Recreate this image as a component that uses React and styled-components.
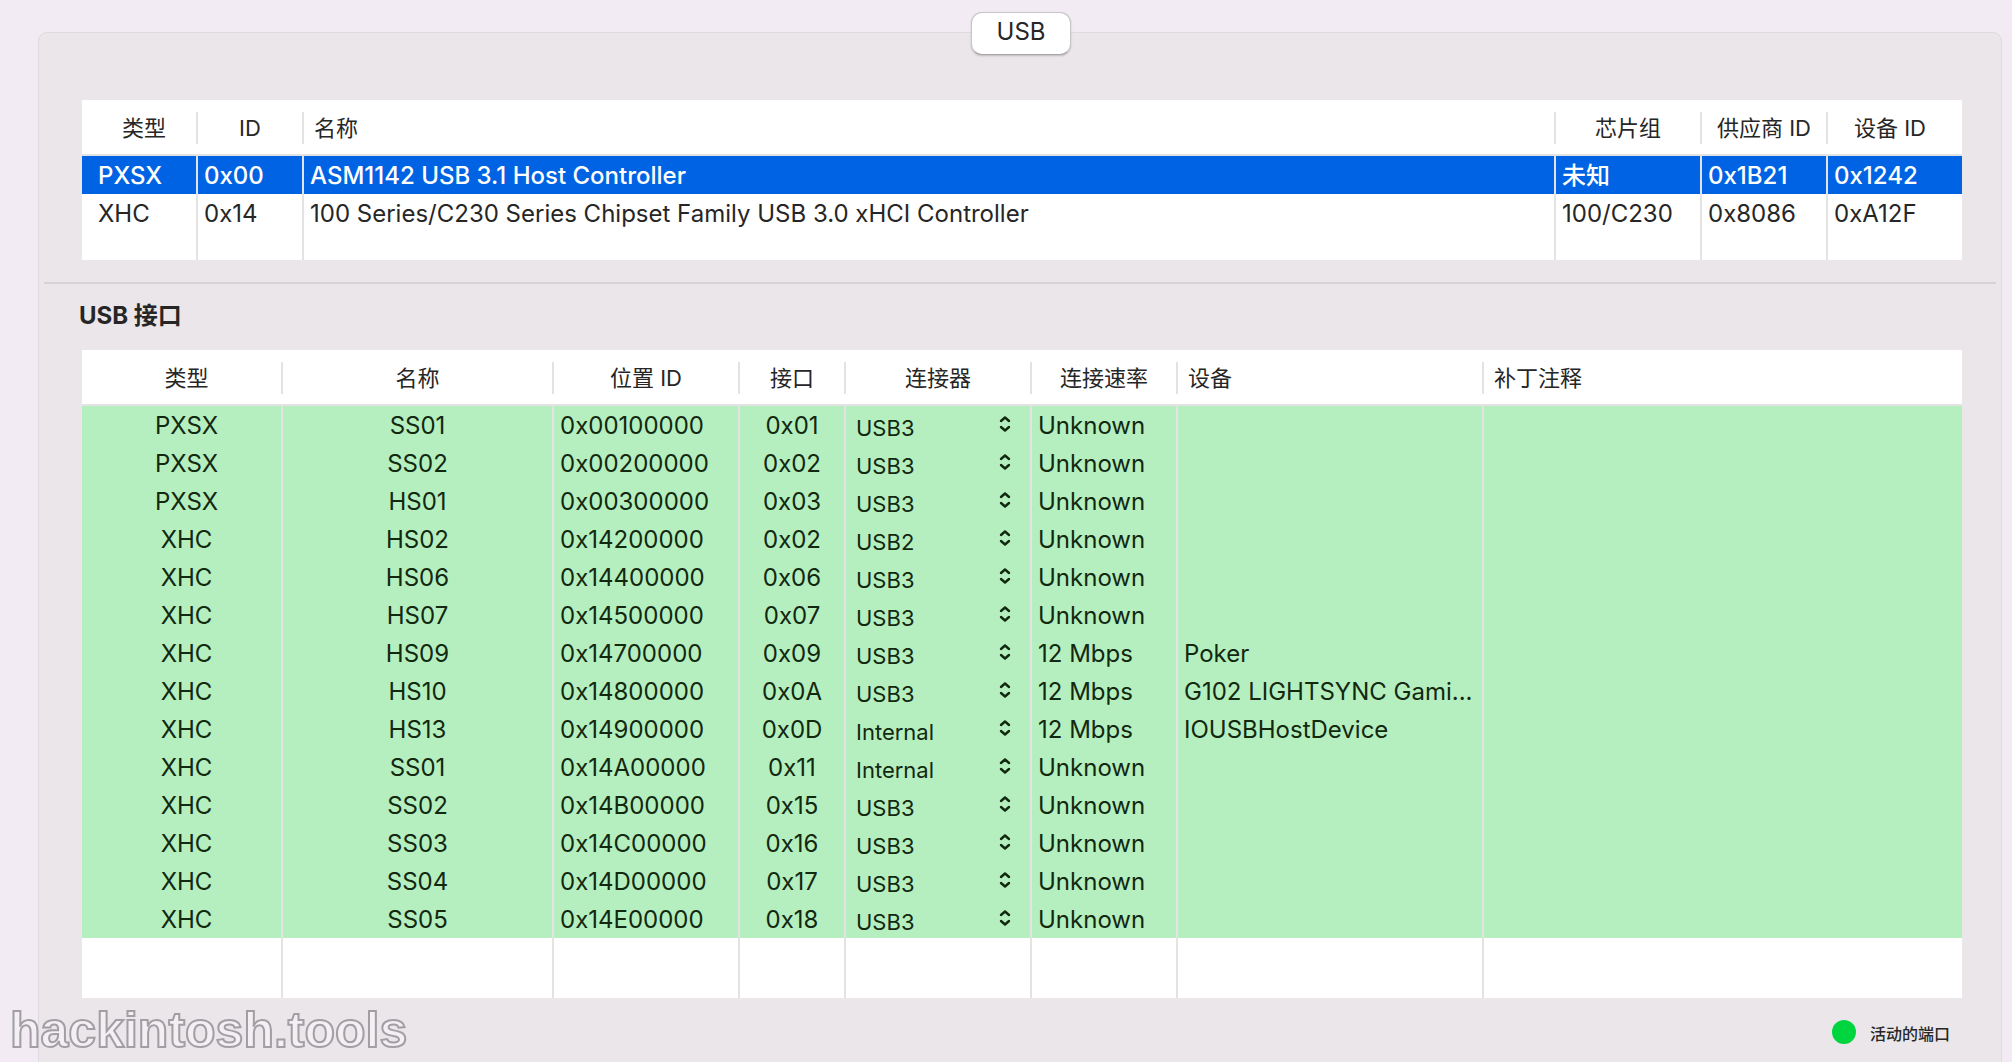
import React, { useState } from "react";
import styled, { createGlobalStyle } from "styled-components";

const GlobalStyle = createGlobalStyle`
  *, *::before, *::after { box-sizing: border-box; }
  body {
    margin: 0;
    background: #f2ebf3;
    color: #262626;
    font-family: Inter, "Noto Sans CJK SC", sans-serif;
    overflow: hidden;
  }
`;

const Page = styled.main`
  position: relative;
  min-height: 100vh;
  padding: 12px 10px 0 38px;
  display: flex;
  flex-direction: column;
`;

const Tabs = styled.nav`
  display: flex;
  justify-content: center;
  position: relative;
  z-index: 1;
  padding-left: 2px;
  margin-bottom: -23px;
`;

const Tab = styled.button`
  width: 100px;
  height: 43px;
  padding: 0 0 3px;
  border: 1px solid #c9c5ca;
  border-bottom-color: #aaa7ab;
  border-radius: 11px;
  background: #fff;
  box-shadow: 0 1px 2px rgba(0, 0, 0, 0.2);
  color: #262626;
  font: 400 24px/36px Inter, sans-serif;
`;

const Panel = styled.section`
  flex: 1;
  min-height: 1040px;
  padding: 67px 5px 0;
  border: 1px solid #dfdadf;
  border-radius: 9px 9px 0 0;
  background: #eae6e9;
`;

const Section = styled.div`
  padding: 0 34px 0 38px;
`;

const Divider = styled.hr`
  height: 2px;
  margin: 22px 0 0;
  border: 0;
  background: #d6d2d6;
`;

const Title = styled.h2`
  margin: 0 0 0 -3px;
  padding: 14px 0 16px;
  font-size: 24px;
  line-height: 36px;
  font-weight: 700;
`;

const Table = styled.table`
  width: 100%;
  border-collapse: separate;
  border-spacing: 0;
  table-layout: fixed;
  background: #fff;
`;

const Col = styled.col`
  width: ${(p) => (p.$width ? `${p.$width}px` : "auto")};
`;

const HeadCell = styled.th`
  height: 56px;
  padding: 2px 12px 0 10px;
  border-bottom: 2px solid #e3e3e3;
  background: linear-gradient(#e3e3e3, #e3e3e3) right 12px / 2px 32px no-repeat;
  font-size: 22px;
  line-height: 32px;
  font-weight: 400;
  text-align: ${(p) => p.$align || "left"};
  white-space: nowrap;
  &:first-child { padding-left: 20px; }
  &:last-child {
    padding-right: 20px;
    background: none;
  }
`;

const Row = styled.tr`
  background: ${(p) => (p.$selected ? "#0063e3" : p.$active ? "#b5efc0" : "#fff")};
  color: ${(p) => (p.$selected ? "#fff" : p.$active ? "#12280f" : "#262626")};
  font-weight: ${(p) => (p.$selected ? 500 : 400)};
`;

const Cell = styled.td`
  height: ${(p) => p.$height || 38}px;
  padding: 2px 6px 0 ${(p) => p.$indent || 6}px;
  border-right: 2px solid #e3e3e3;
  font-size: 24px;
  line-height: 36px;
  text-align: ${(p) => p.$align || "left"};
  white-space: nowrap;
  overflow: hidden;
  text-overflow: ellipsis;
  &:last-child { border-right: 0; }
`;

const Picker = styled.label`
  display: flex;
  align-items: center;
  height: 36px;
  padding-right: 13px;
`;

const Select = styled.select`
  flex: 1;
  min-width: 0;
  height: 36px;
  padding: 4px 0 0 4px;
  border: 0;
  background: none;
  appearance: none;
  color: inherit;
  font: 400 22px/32px Inter, sans-serif;
`;

const Arrows = styled.svg`
  width: 12px;
  height: 20px;
  margin-bottom: 4px;
  fill: none;
  stroke: currentColor;
  stroke-width: 2.4;
  stroke-linecap: round;
  stroke-linejoin: round;
`;

const Legend = styled.footer`
  display: flex;
  justify-content: flex-end;
  align-items: center;
  gap: 14px;
  padding: 20px 12px 0 0;
  font-size: 16px;
  line-height: 28px;
  font-weight: 500;
`;

const LegendText = styled.span`
  height: 28px;
  padding-top: 2px;
`;

const Dot = styled.i`
  width: 24px;
  height: 24px;
  border-radius: 50%;
  background: #00d53f;
`;

const Watermark = styled.div`
  position: absolute;
  left: 10px;
  top: 1001px;
  font: 700 50px/58px "Liberation Sans", Arial, sans-serif;
  color: #f3f0f4;
  -webkit-text-stroke: 2px #a29ea4;
`;

const controllerColumns = [
  { label: "类型", width: 116, align: "center", indent: 16 },
  { label: "ID", width: 106, align: "center" },
  { label: "名称" },
  { label: "芯片组", width: 146, align: "center" },
  { label: "供应商 ID", width: 126, align: "center" },
  { label: "设备 ID", width: 134, align: "center" },
];

const controllers = [
  ["PXSX", "0x00", "ASM1142 USB 3.1 Host Controller", "未知", "0x1B21", "0x1242"],
  ["XHC", "0x14", "100 Series/C230 Series Chipset Family USB 3.0 xHCI Controller", "100/C230", "0x8086", "0xA12F"],
];

const portColumns = [
  { label: "类型", width: 201, align: "center", cell: "center", indent: 16 },
  { label: "名称", width: 271, align: "center", cell: "center" },
  { label: "位置 ID", width: 186, align: "center" },
  { label: "接口", width: 106, align: "center", cell: "center" },
  { label: "连接器", width: 186, align: "center" },
  { label: "连接速率", width: 146, align: "center" },
  { label: "设备", width: 306 },
  { label: "补丁注释" },
];

const ports = [
  ["PXSX", "SS01", "0x00100000", "0x01", "USB3", "Unknown", "", ""],
  ["PXSX", "SS02", "0x00200000", "0x02", "USB3", "Unknown", "", ""],
  ["PXSX", "HS01", "0x00300000", "0x03", "USB3", "Unknown", "", ""],
  ["XHC", "HS02", "0x14200000", "0x02", "USB2", "Unknown", "", ""],
  ["XHC", "HS06", "0x14400000", "0x06", "USB3", "Unknown", "", ""],
  ["XHC", "HS07", "0x14500000", "0x07", "USB3", "Unknown", "", ""],
  ["XHC", "HS09", "0x14700000", "0x09", "USB3", "12 Mbps", "Poker", ""],
  ["XHC", "HS10", "0x14800000", "0x0A", "USB3", "12 Mbps", "G102 LIGHTSYNC Gami...", ""],
  ["XHC", "HS13", "0x14900000", "0x0D", "Internal", "12 Mbps", "IOUSBHostDevice", ""],
  ["XHC", "SS01", "0x14A00000", "0x11", "Internal", "Unknown", "", ""],
  ["XHC", "SS02", "0x14B00000", "0x15", "USB3", "Unknown", "", ""],
  ["XHC", "SS03", "0x14C00000", "0x16", "USB3", "Unknown", "", ""],
  ["XHC", "SS04", "0x14D00000", "0x17", "USB3", "Unknown", "", ""],
  ["XHC", "SS05", "0x14E00000", "0x18", "USB3", "Unknown", "", ""],
];

function ConnectorPicker({ initial, port }) {
  const [value, setValue] = useState(initial);
  return (
    <Picker>
      <Select aria-label={port} value={value} onChange={(e) => setValue(e.target.value)}>
        <option>USB2</option>
        <option>USB3</option>
        <option>Internal</option>
      </Select>
      <Arrows viewBox="0 0 12 20" aria-hidden="true">
        <path d="M2 7 6 3.5 10 7M2 13 6 16.5 10 13" />
      </Arrows>
    </Picker>
  );
}

function DataTable({ columns, children, filler }) {
  return (
    <Table>
      <colgroup>
        {columns.map((c, i) => <Col key={i} $width={c.width} />)}
      </colgroup>
      <thead>
        <tr>
          {columns.map((c, i) => <HeadCell key={i} scope="col" $align={c.align}>{c.label}</HeadCell>)}
        </tr>
      </thead>
      <tbody>
        {children}
        <Row aria-hidden="true">
          {columns.map((c, i) => <Cell key={i} $height={filler} />)}
        </Row>
      </tbody>
    </Table>
  );
}

export default function App() {
  const [selected, setSelected] = useState(0);
  return (
    <Page>
      <GlobalStyle />
      <Tabs>
        <Tab type="button">USB</Tab>
      </Tabs>
      <Panel>
        <Section>
          <DataTable columns={controllerColumns} filler={28}>
            {controllers.map((row, r) => (
              <Row key={row[0]} $selected={selected === r} onClick={() => setSelected(r)}>
                {row.map((text, i) => (
                  <Cell key={i} $indent={controllerColumns[i].indent}>{text}</Cell>
                ))}
              </Row>
            ))}
          </DataTable>
        </Section>
        <Divider />
        <Section>
          <Title>USB 接口</Title>
          <DataTable columns={portColumns} filler={60}>
            {ports.map((row) => (
              <Row key={row[2]} $active>
                {row.map((text, i) => (
                  <Cell key={i} $align={portColumns[i].cell} $indent={portColumns[i].indent}>
                    {i === 4 ? <ConnectorPicker initial={text} port={row[1]} /> : text}
                  </Cell>
                ))}
              </Row>
            ))}
          </DataTable>
          <Legend><Dot /><LegendText>活动的端口</LegendText></Legend>
        </Section>
      </Panel>
      <Watermark>hackintosh.tools</Watermark>
    </Page>
  );
}
